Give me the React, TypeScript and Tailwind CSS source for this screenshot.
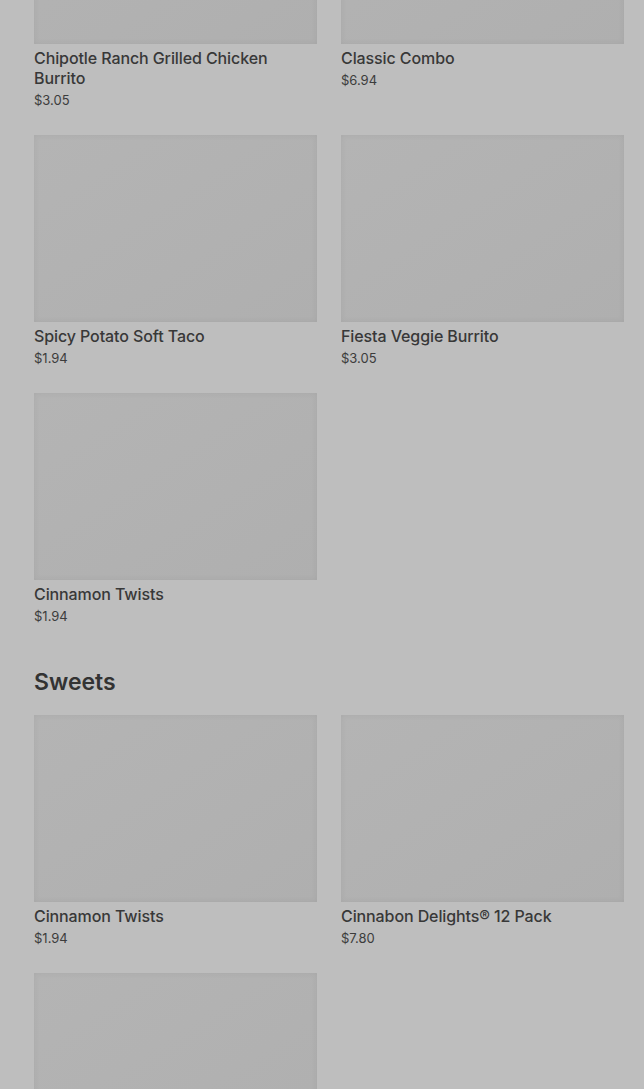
type Item = { name: string; price: string };

const combos: Item[] = [
  { name: 'Chipotle Ranch Grilled Chicken Burrito', price: '$3.05' },
  { name: 'Classic Combo', price: '$6.94' },
  { name: 'Spicy Potato Soft Taco', price: '$1.94' },
  { name: 'Fiesta Veggie Burrito', price: '$3.05' },
  { name: 'Cinnamon Twists', price: '$1.94' },
];

const sweets: Item[] = [
  { name: 'Cinnamon Twists', price: '$1.94' },
  { name: 'Cinnabon Delights® 12 Pack', price: '$7.80' },
];

function Card({ item }: { item?: Item }) {
  return (
    <div className="flex flex-col">
      <div className="h-[187px] w-full bg-gradient-to-br from-[#b4b4b4] to-[#afafaf] shadow-[inset_0_0_6px_rgba(0,0,0,0.06)]" />
      {item && (
        <>
          <p className="mt-[4px] text-[16px] leading-[20px] font-medium tracking-[-0.1px] text-[#383838]">{item.name}</p>
          <p className="mt-[3px] text-[13px] leading-[18px] text-[#3c3c3c]">{item.price}</p>
        </>
      )}
    </div>
  );
}

export default function App() {
  return (
    <div className="h-[1089px] overflow-hidden bg-[#bebebe]" style={{ fontFamily: 'Inter, "Noto Sans", sans-serif' }}>
      <div className="-mt-[143px] pl-[34px] pr-[20px]">
        <section className="grid grid-cols-2 gap-x-[24px] gap-y-[26px] items-start">
          {combos.map((item, i) => (
            <Card key={i} item={item} />
          ))}
        </section>

        <h2 className="mt-[41px] mb-[17px] text-[23px] leading-[32px] font-semibold text-[#333333]">Sweets</h2>
        <section className="grid grid-cols-2 gap-x-[24px] gap-y-[26px] items-start">
          {sweets.map((item, i) => (
            <Card key={i} item={item} />
          ))}
          {/* next card is cut off by the bottom of the view */}
          <Card />
        </section>
      </div>
    </div>
  );
}
